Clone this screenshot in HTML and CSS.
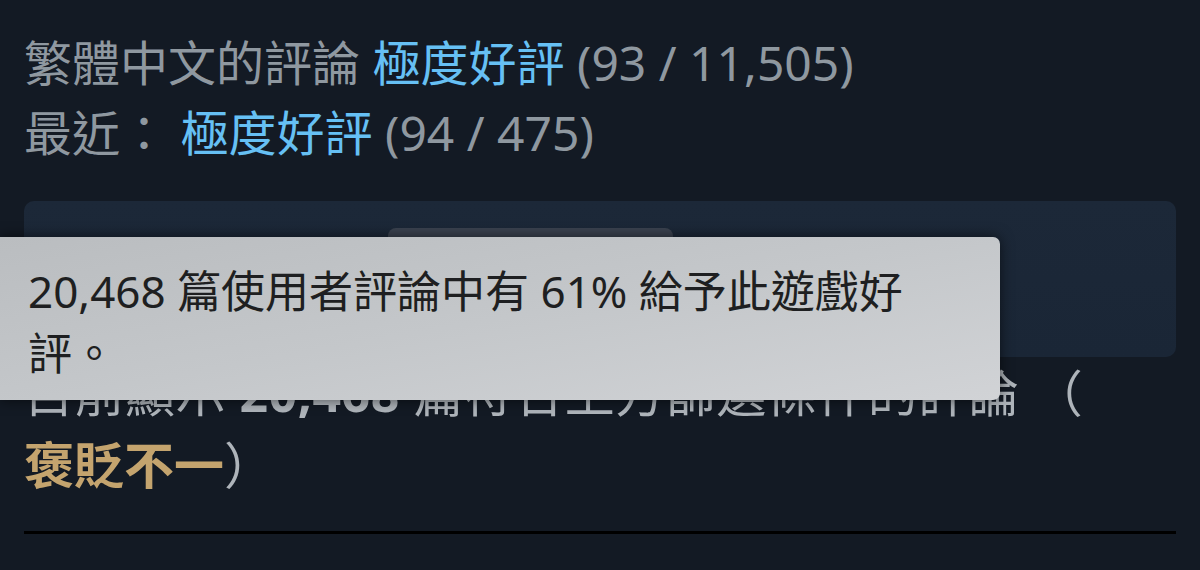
FILE: index.html
```html
<!DOCTYPE html>
<html lang="zh-Hant">
<head>
<meta charset="utf-8">
<link rel="stylesheet" href="styles.css">
</head>
<body>
<div class="page">
  <div class="summary">
    <div class="row">繁體中文的評論 <span class="positive">極度好評</span> <span class="count">(93 / 11,505)</span></div>
    <div class="row">最近： <span class="positive">極度好評</span> <span class="count">(94 / 475)</span></div>
  </div>
  <div class="panel">
    <div class="bar"></div>
  </div>
  <p class="showing">目前顯示 <b class="num">20,468</b> 篇符合上方篩選條件的評論 （<span class="mixed">褒貶不一</span>）</p>
  <div class="rule"></div>
  <div class="tooltip">20,468 篇使用者評論中有 61% 給予此遊戲好評。</div>
</div>
</body>
</html>
```
FILE: styles.css
```css
html, body {
  margin: 0;
  padding: 0;
  background: #131a24;
}
.page {
  position: relative;
  width: 1200px;
  height: 570px;
  overflow: hidden;
  padding: 28px 24px 0;
  box-sizing: border-box;
  font-family: "Noto Sans", "Noto Sans CJK TC", sans-serif;
  color: #8f98a0;
}
.summary {
  display: flex;
  flex-direction: column;
}
.row {
  font-size: 48px;
  line-height: 70px;
  white-space: nowrap;
}
.positive {
  color: #66c0f4;
}
.count {
  color: #8f98a0;
}
.panel {
  margin-top: 33px;
  height: 156px;
  border-radius: 10px;
  background: linear-gradient(180deg, #1c2838 0%, #1a2636 100%);
  padding: 27px 0 0 364px;
  box-sizing: border-box;
}
.bar {
  width: 285px;
  height: 60px;
  border-radius: 8px;
  background: #3b4350;
}
.showing {
  margin: 0;
  font-size: 50px;
  line-height: 72px;
  letter-spacing: 0.5px;
  color: #aeb4ba;
}
.num {
  font-weight: 700;
}
.mixed {
  display: inline-block;
  color: #c4a46e;
  font-weight: 700;
  letter-spacing: 0;
}
.rule {
  margin-top: 30px;
  height: 3px;
  background: #000;
}
.tooltip {
  position: absolute;
  left: 0;
  top: 237px;
  width: 1000px;
  height: 163px;
  box-sizing: border-box;
  padding: 23px 70px 0 28px;
  border-radius: 0 7px 7px 0;
  background: linear-gradient(170deg, #babdc0 0%, #c4c7ca 50%, #d1d3d6 100%);
  box-shadow: 0 0 14px rgba(0, 0, 0, 0.6);
  font-size: 44px;
  line-height: 62px;
  color: #1e1f21;
}
```
